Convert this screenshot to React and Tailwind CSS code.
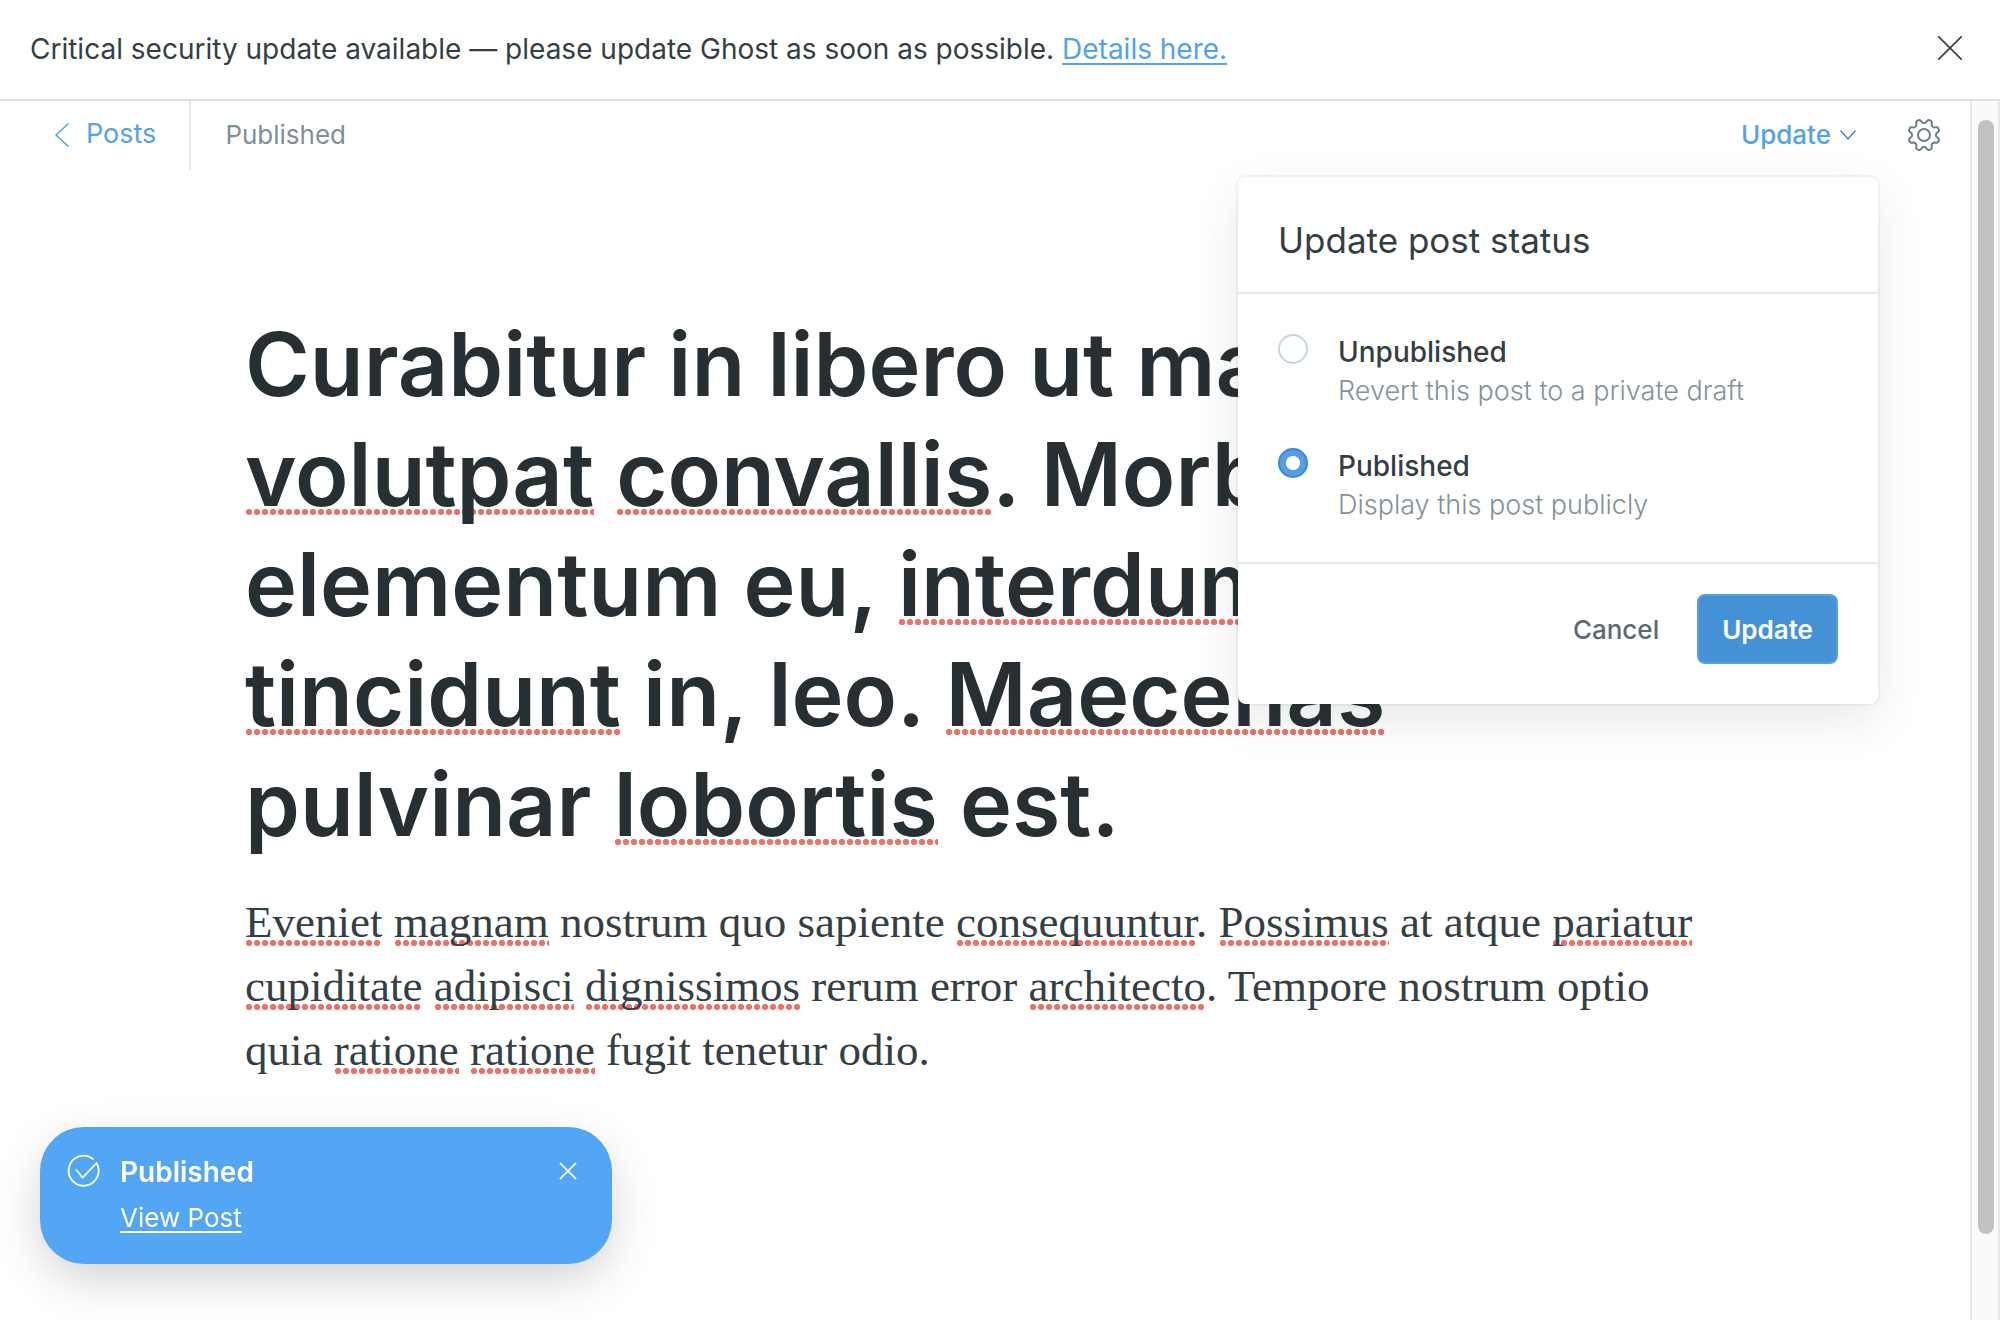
const dots =
  "bg-repeat-x bg-[length:8px_6px] bg-[image:radial-gradient(circle,#ee7168_2.8px,transparent_3.4px)]";

function Typo({ children, big }) {
  return (
    <span className={`${dots} ${big ? "bg-[position:0_calc(100%-12px)]" : "bg-[position:0_calc(100%-1px)]"}`}>
      {children}
    </span>
  );
}

function Cross({ className }) {
  return (
    <svg viewBox="0 0 24 24" className={className} fill="none" stroke="currentColor" strokeLinecap="round">
      <path d="M0.5 0.5 23.5 23.5M23.5 0.5 0.5 23.5" />
    </svg>
  );
}

const gearPath =
  Array.from({ length: 160 }, (_, i) => {
    const a = (i / 160) * 2 * Math.PI;
    const r = 13.9 - (1.9 * Math.tanh(1.7 * Math.cos(8 * a))) / Math.tanh(1.7);
    const x = (16 + r * Math.cos(a)).toFixed(2);
    const y = (16 + r * Math.sin(a)).toFixed(2);
    return `${i ? "L" : "M"}${x} ${y}`;
  }).join("") + "Z";

function Gear() {
  return (
    <svg viewBox="0 0 32 32" className="size-8 overflow-visible" fill="none" stroke="#6b828d" strokeWidth="2" strokeLinejoin="round">
      <circle cx="16" cy="16" r="6" />
      <path d={gearPath} />
    </svg>
  );
}

function Option({ id, title, note, checked }) {
  return (
    <div className="flex gap-[30px]">
      <input
        type="radio"
        name="status"
        id={id}
        defaultChecked={checked}
        className="size-[30px] shrink-0 appearance-none rounded-full border-2 border-[#c1d7e8] bg-white checked:border-[#3e85d4] checked:bg-[radial-gradient(circle,white_6.5px,#549fe3_7.5px)]"
      />
      <label htmlFor={id} className="flex flex-col">
        <span className="text-[28px] leading-[36px] font-medium text-[#343f44]">{title}</span>
        <span className="text-[27px] leading-[42px] font-light text-[#839299]">{note}</span>
      </label>
    </div>
  );
}

export default function App() {
  return (
    <div className="flex min-h-screen flex-col bg-white font-['Inter',sans-serif] text-[#343f44]">
      <header className="flex items-center justify-between border-b-2 border-[#dfe1e3] py-[29px] pr-[38px] pl-[30px]">
        <p className="text-[28px] leading-[41px]">
          Critical security update available — please update Ghost as soon as possible.{" "}
          <a href="#details" className="text-[#54a3ea] underline decoration-2 underline-offset-4">Details here.</a>
        </p>
        <button aria-label="Dismiss" className="pb-1 text-[#343f44]"><Cross className="size-6 stroke-[1.6]" /></button>
      </header>

      <div className="flex grow">
        <div className="flex grow flex-col">
          <nav className="flex h-[69px] items-stretch pr-[30px]">
            <a href="#posts" className="flex items-center gap-[17px] border-r-2 border-[#e3e9ee] pr-[33px] pb-0.5 pl-[55px] text-[27px] text-[#54a3ea]">
              <svg viewBox="0 0 14 24" className="h-6 w-[14px]" fill="none" stroke="currentColor" strokeWidth="1.5"><path d="M13.5 0.5 1 12 13.5 23.5" /></svg>
              Posts
            </a>
            <span className="flex grow items-center pb-0.5 pl-[34px] text-[26px] text-[#7d8f98]">Published</span>
            <div className="relative flex items-center gap-[52px] pb-0.5">
              <button className="flex items-center gap-[9px] text-[26px] font-medium text-[#54a3ea]">
                Update
                <svg viewBox="0 0 16 10" className="h-[10px] w-4" fill="none" stroke="#4a7fae" strokeWidth="1.4"><path d="M0.5 0.5 8 9 15.5 0.5" /></svg>
              </button>
              <button aria-label="Settings"><Gear /></button>

              <form className="absolute top-[76px] right-[62px] z-10 w-[640px] rounded-lg bg-white shadow-[0_0_0_2px_rgba(0,0,0,0.04),0_16px_50px_-4px_rgba(39,44,49,0.13)]">
                <h2 className="border-b-2 border-[#e3ecf2] px-10 pt-10 pb-[29px] text-[35px] leading-[46px]">Update post status</h2>
                <div className="flex flex-col gap-9 border-b-2 border-[#e3ecf2] px-10 pt-10 pb-[36px]">
                  <Option id="unpublished" title="Unpublished" note="Revert this post to a private draft" />
                  <Option id="published" title="Published" note="Display this post publicly" checked />
                </div>
                <div className="flex items-center justify-end gap-[38px] px-10 pt-[30px] pb-10">
                  <button type="button" className="text-[26px] font-medium text-[#5a6b75]">Cancel</button>
                  <button type="button" className="h-[70px] rounded-lg border-2 border-[#549fe3] bg-[#4591d6] px-[23px] text-[26px] font-semibold text-white">Update</button>
                </div>
              </form>
            </div>
          </nav>

          <main className="px-[245px] pt-[139px]">
            <h1 className="text-[88px] leading-[110px] font-semibold whitespace-nowrap text-[#282f32]">
              Curabitur in libero ut massa<br />
              <Typo big>volutpat</Typo> <Typo big>convallis</Typo>. Morbi odio<br />
              elementum eu, <Typo big>interdum</Typo> eu,<br />
              <Typo big>tincidunt</Typo> in, leo. <Typo big>Maecenas</Typo><br />
              pulvinar <Typo big>lobortis</Typo> est.
            </h1>
            <p className="mt-[31px] font-['Liberation_Serif',serif] text-[45px] leading-[64px] whitespace-nowrap">
              <Typo>Eveniet</Typo> <Typo>magnam</Typo> nostrum quo sapiente <Typo>consequuntur</Typo>. <Typo>Possimus</Typo> at atque <Typo>pariatur</Typo><br />
              <Typo>cupiditate</Typo> <Typo>adipisci</Typo> <Typo>dignissimos</Typo> rerum error <Typo>architecto</Typo>. Tempore nostrum optio<br />
              quia <Typo>ratione</Typo> <Typo>ratione</Typo> fugit tenetur odio.
            </p>
          </main>
        </div>

        <div className="flex w-[30px] shrink-0 flex-col border-x-2 border-[#e8e8e8] bg-[#fafafa] px-1.5 pt-[19px] pb-[86px]">
          <div className="w-4 grow rounded-full bg-[#c1c1c1]" />
        </div>
      </div>

      <aside className="fixed bottom-14 left-10 flex w-[572px] items-start rounded-[44px] bg-[#52a6f3] px-7 pt-[25px] pb-[26px] text-white shadow-[0_16px_50px_-4px_rgba(0,0,0,0.2)]">
        <svg viewBox="0 0 32 32" className="mt-[3px] size-8 overflow-visible" fill="none" stroke="white" strokeWidth="1.8" strokeLinecap="round" strokeLinejoin="round">
          <path d="M25 4A15 15 0 1 0 28.5 8L14.7 22.7 8.3 15" />
        </svg>
        <div className="ml-5 flex grow flex-col items-start">
          <strong className="text-[28px] leading-[40px] font-semibold">Published</strong>
          <a href="#view" className="mt-[6px] text-[26px] leading-[40px] underline decoration-2 underline-offset-4">View Post</a>
        </div>
        <button aria-label="Close" className="mt-[11px] mr-2"><Cross className="size-4 stroke-[2.4] overflow-visible" /></button>
      </aside>
    </div>
  );
}
